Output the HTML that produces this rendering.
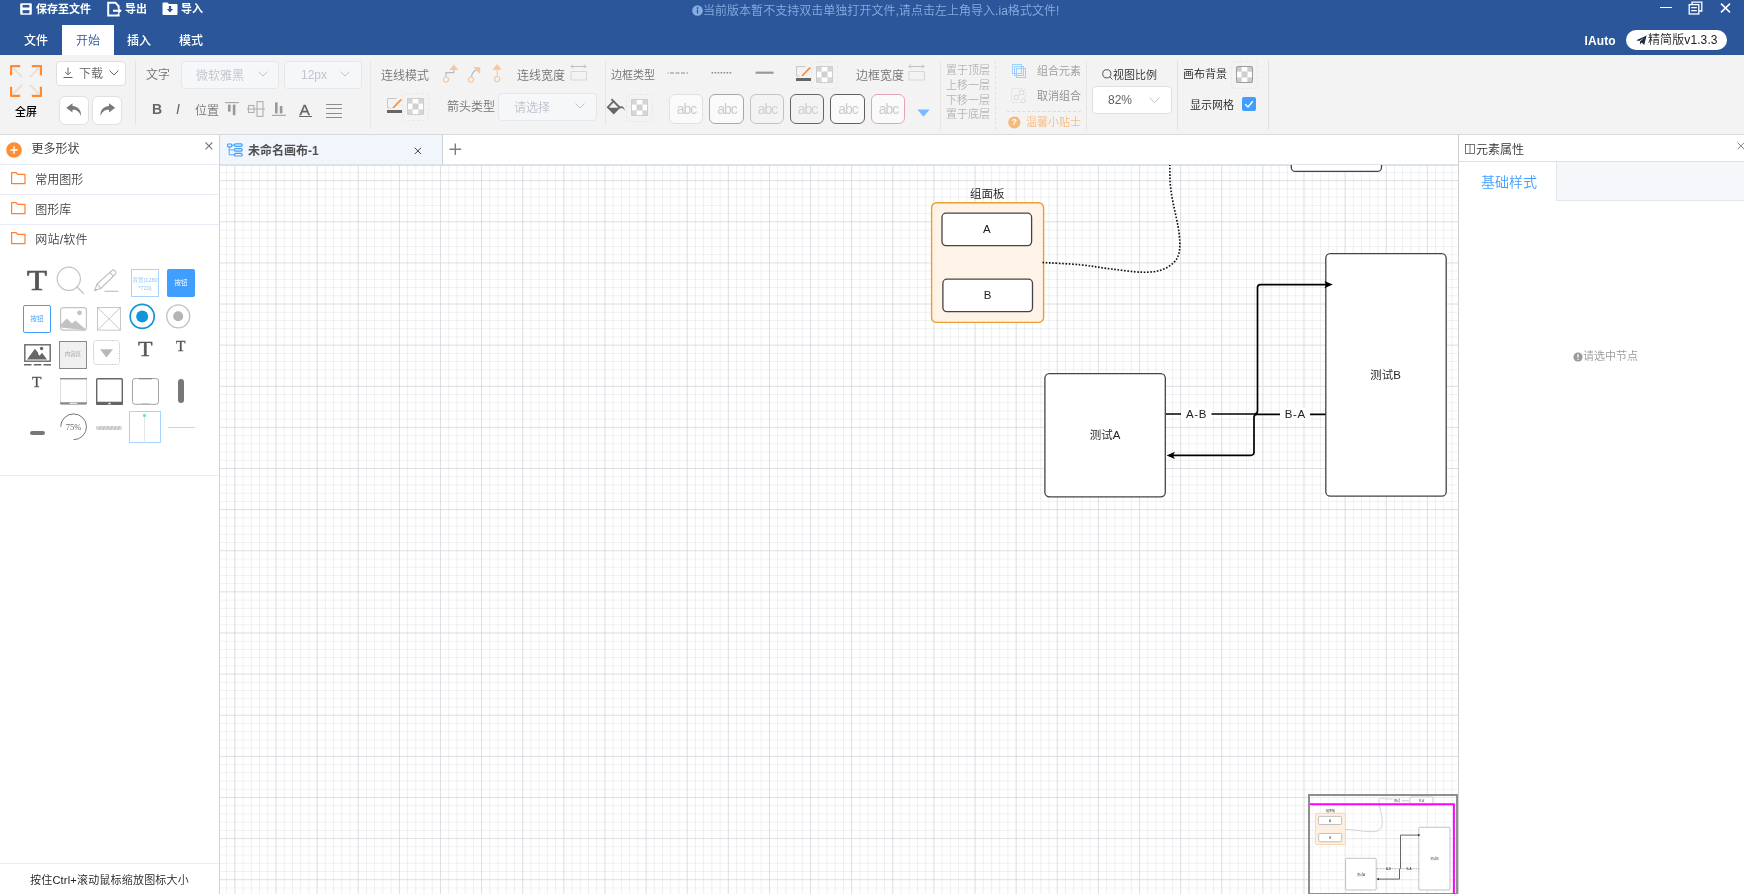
<!DOCTYPE html>
<html lang="zh-CN">
<head>
<meta charset="utf-8">
<title>IAuto</title>
<style>
*{box-sizing:border-box;margin:0;padding:0}
html,body{width:1744px;height:894px;overflow:hidden;background:#fff}
body{position:relative;font-family:"Liberation Sans","Noto Sans CJK SC",sans-serif;font-size:12px;color:#606266;font-weight:350}
.a{position:absolute}
.t{position:absolute;white-space:nowrap;line-height:1}
svg{position:absolute;overflow:visible}
#hdr{left:0;top:0;width:1744px;height:55px;background:#2b579a}
#tb{left:0;top:55px;width:1744px;height:80px;background:#f3f3f3;border-bottom:1px solid #d9d9d9}
.w{color:#fff}
.vs{position:absolute;width:1px;background:#e2e2e2;top:61px;height:69px}
.sel{position:absolute;border:1px solid #e5e7eb;border-radius:4px;background:#f6f7f9;height:28px}
.selw{position:absolute;border:1px solid #dcdfe6;border-radius:4px;background:#fff}
.dis{color:#c0c4cc}
.chk{position:absolute;border:1px dashed #e8e8e8;border-radius:4px;width:27px;height:28px}
.chk i{position:absolute;left:5px;top:5px;width:17px;height:17px;border-radius:2px;background:#fff;overflow:hidden}
.abc{position:absolute;top:94px;width:34px;height:30px;border:1px solid #ddd;border-radius:6px;background:#fafafa;color:#cbcbcb;font-size:14px;line-height:28px;text-align:center;letter-spacing:-1px;padding-left:1px;font-weight:400}
.lay{position:absolute;left:946px;font-size:11px;color:#b4b4b4;line-height:1;white-space:nowrap}
#left{left:0;top:135px;width:220px;height:759px;background:#fff;border-right:1px solid #d2d3d8}
.hl{position:absolute;left:0;width:219px;height:1px;background:#e6ebf5}
#right{left:1458px;top:135px;width:286px;height:759px;background:#fff;border-left:1px solid #cdcfd4}
</style>
</head>
<body>
<div id="wrap" style="position:absolute;left:0;top:0;width:1744px;height:894px;will-change:transform">
<!-- ===== HEADER ===== -->
<div id="hdr" class="a"></div>
<!-- save icon -->
<svg class="a" style="left:20px;top:3px" width="12" height="12" viewBox="0 0 12 12"><path d="M1.2 0.3h9.6a1 1 0 0 1 1 1v9.4a1 1 0 0 1-1 1H1.2a1 1 0 0 1-1-1V1.3a1 1 0 0 1 1-1z" fill="#fff"/><rect x="2.6" y="1.9" width="6.8" height="2.6" fill="#2b579a"/><rect x="2.6" y="7.1" width="6.8" height="3.2" fill="#2b579a"/></svg>
<div class="t w" style="left:36px;top:4px;font-size:11px;font-weight:700">保存至文件</div>
<!-- export icon -->
<svg class="a" style="left:107px;top:1px" width="15" height="16" viewBox="0 0 15 16"><path d="M11.600 7.400V5.200L8.400 1.700H1.200V14.600H11.600V12.400" fill="none" stroke="#fff" stroke-width="2"/><path d="M6 8.800h5.200V6.600l3.600 3.200-3.600 3.200v-2.200H6z" fill="#fff"/></svg>
<div class="t w" style="left:125px;top:4px;font-size:11px;font-weight:700">导出</div>
<!-- import icon -->
<svg class="a" style="left:162px;top:2px" width="16" height="13" viewBox="0 0 16 13"><path d="M0.5 1.5a1 1 0 0 1 1-1h4l1.5 1.6h7.5a1 1 0 0 1 1 1v8.9a1 1 0 0 1-1 1h-13a1 1 0 0 1-1-1z" fill="#fff"/><path d="M6.9 4h2.2v3h2l-3.1 3.4L4.9 7h2z" fill="#2b579a"/></svg>
<div class="t w" style="left:181px;top:4px;font-size:11px;font-weight:700">导入</div>
<!-- center msg -->
<svg class="a" style="left:692px;top:5px" width="11" height="11" viewBox="0 0 11 11"><circle cx="5.5" cy="5.5" r="5.3" fill="#86ace2"/><rect x="4.8" y="4.6" width="1.4" height="3.8" fill="#2b579a"/><circle cx="5.5" cy="3" r="0.9" fill="#2b579a"/></svg>
<div class="t" style="left:703px;top:5px;color:#86ace2;letter-spacing:0.030px">当前版本暂不支持双击单独打开文件,请点击左上角导入.ia格式文件!</div>
<!-- window controls -->
<div class="a" style="left:1660px;top:7px;width:12px;height:1.200px;background:#fff"></div>
<svg class="a" style="left:1688px;top:1px" width="15" height="14" viewBox="0 0 15 14"><path d="M4 3V1.2h9.8V10H11" fill="none" stroke="#fff" stroke-width="1.3"/><rect x="1.2" y="3.6" width="9.6" height="9.4" fill="none" stroke="#fff" stroke-width="1.3"/><path d="M3.2 6.6h5.6M3.2 9.6h5.6" stroke="#fff" stroke-width="1.2"/></svg>
<svg class="a" style="left:1720px;top:3px" width="11" height="10" viewBox="0 0 11 10"><path d="M1 0.6l9 8.8M10 0.6l-9 8.8" stroke="#fff" stroke-width="1.5"/></svg>
<!-- menu tabs -->
<div class="a" style="left:62px;top:25px;width:52px;height:30px;background:#fff"></div>
<div class="t w" style="left:24px;top:35px;font-size:12px;font-weight:500">文件</div>
<div class="t" style="left:76px;top:35px;font-size:12px;color:#2b579a">开始</div>
<div class="t w" style="left:127px;top:35px;font-size:12px;font-weight:500">插入</div>
<div class="t w" style="left:179px;top:35px;font-size:12px;font-weight:500">模式</div>
<!-- right brand -->
<div class="t w" style="left:1584.500px;top:35px;font-weight:bold;font-size:12px;letter-spacing:0.100px">IAuto</div>
<div class="a" style="left:1626px;top:30px;width:101px;height:20px;border-radius:10px;background:#fff"></div>
<svg class="a" style="left:1636px;top:35px" width="11" height="11" viewBox="0 0 11 11"><path d="M0.3 5.2L10.6 0.4 8.2 10 5.6 7.4 4 9.6V6.6L8.6 2.2 3.2 6z" fill="#1f2a44"/></svg>
<div class="t" style="left:1648px;top:34px;font-size:12px;color:#222;letter-spacing:0.100px">精简版v1.3.3</div>
<!--HDR-->
<!-- ===== TOOLBAR ===== -->
<div id="tb" class="a"></div>
<!-- fullscreen -->
<svg class="a" style="left:10px;top:65px" width="32" height="32" viewBox="0 0 32 32"><g fill="none" stroke="#ff8a34" stroke-width="2.200" stroke-linejoin="round"><path d="M1.100 10.200V1.100h9.100M21.800 1.100h9.100v9.100M30.900 21.800v9.100h-9.100M10.200 30.900H1.100v-9.100"/></g><g stroke="#e8e1d5" stroke-width="1.900"><path d="M2.500 2.500L12 12M29.500 2.500L20 12M29.500 29.500L20 20M2.500 29.500L12 20"/></g></svg>
<div class="t" style="left:15px;top:107px;font-size:11px;color:#000;font-weight:500">全屏</div>
<!-- download btn -->
<div class="selw" style="left:56px;top:61px;width:70px;height:25px"></div>
<svg class="a" style="left:63px;top:67px" width="10" height="12" viewBox="0 0 10 12"><path d="M5 0.500v7M2.200 5L5 7.800 7.800 5M0.500 10.500h9" fill="none" stroke="#606266" stroke-width="1"/></svg>
<div class="t" style="left:79px;top:68px;font-size:12px;color:#606266">下载</div>
<svg class="a" style="left:109px;top:70px" width="10" height="6" viewBox="0 0 10 6"><path d="M0.600 0.600L5 5 9.400 0.600" fill="none" stroke="#606266" stroke-width="1"/></svg>
<!-- undo/redo -->
<div class="selw" style="left:59px;top:96px;width:30px;height:29px;border-radius:6px;border-color:#e0e0e0"></div>
<div class="selw" style="left:92px;top:96px;width:30px;height:29px;border-radius:6px;border-color:#e0e0e0"></div>
<svg class="a" style="left:66px;top:103px" width="16.500" height="13.500" viewBox="0 0 16 12" preserveAspectRatio="none"><path d="M6.300 0.200L0.300 4.300l6 4.100V6c3.600-0.200 6.400 1.200 8.200 5.600 0.600-5.200-3-8.600-8.200-8.900z" fill="#7a7a7a"/></svg>
<svg class="a" style="left:99px;top:103px" width="16.500" height="13.500" viewBox="0 0 16 12" preserveAspectRatio="none"><path d="M9.700 0.200l6 4.100-6 4.100V6C6.100 5.800 3.300 7.200 1.500 11.600 0.900 6.400 4.500 3 9.700 2.700z" fill="#7a7a7a"/></svg>
<div class="vs" style="left:135px;height:64px"></div>
<!-- text group -->
<div class="t" style="left:146px;top:69px;color:#747474">文字</div>
<div class="sel" style="left:181px;top:61px;width:98px"></div>
<div class="t dis" style="left:196px;top:70px">微软雅黑</div>
<svg class="a" style="left:258px;top:71px" width="10" height="6" viewBox="0 0 10 6"><path d="M0.600 0.600L5 5 9.400 0.600" fill="none" stroke="#c0c4cc" stroke-width="1"/></svg>
<div class="sel" style="left:284px;top:61px;width:78px"></div>
<div class="t dis" style="left:301px;top:69px">12px</div>
<svg class="a" style="left:340px;top:71px" width="10" height="6" viewBox="0 0 10 6"><path d="M0.600 0.600L5 5 9.400 0.600" fill="none" stroke="#c0c4cc" stroke-width="1"/></svg>
<div class="t" style="left:152px;top:102px;font-size:14px;font-weight:bold;color:#666">B</div>
<div class="t" style="left:176px;top:102px;font-size:14px;font-style:italic;color:#666">I</div>
<div class="t" style="left:195px;top:105px;color:#777">位置</div>
<svg class="a" style="left:225px;top:102px" width="14" height="14" viewBox="0 0 14 14"><path d="M0 0.600h14" stroke="#aaa" stroke-width="1.200"/><rect x="3" y="2.600" width="2.600" height="7" fill="#999"/><rect x="7.800" y="2.600" width="2.600" height="10.600" fill="#999"/></svg>
<svg class="a" style="left:247px;top:101px" width="18" height="16" viewBox="0 0 18 16"><g fill="none" stroke="#b0b0b0" stroke-width="1.100"><rect x="1.500" y="4.500" width="5.500" height="7"/><rect x="10" y="0.600" width="6" height="14.800"/><path d="M0 8h18"/></g></svg>
<svg class="a" style="left:272px;top:102px" width="14" height="14" viewBox="0 0 14 14"><path d="M0 13.400h14" stroke="#aaa" stroke-width="1.200"/><rect x="3" y="0.400" width="2.600" height="11" fill="#999"/><rect x="7.800" y="4" width="2.600" height="7.400" fill="#999"/></svg>
<div class="t" style="left:299.500px;top:102px;font-size:15.500px;color:#666;font-weight:400;-webkit-text-stroke:0.350px #666">A</div>
<div class="a" style="left:299px;top:116px;width:13px;height:1.400px;background:#666"></div>
<svg class="a" style="left:326px;top:103px" width="16" height="15" viewBox="0 0 16 15"><path d="M0 1.500h16M0 5.500h16M0 10.500h16M0 14.500h16" stroke="#8c8c8c" stroke-width="1"/></svg>
<div class="vs" style="left:370px;height:68px;background:#e8e8e8"></div>
<!-- connector group -->
<div class="t" style="left:381px;top:70px;color:#747474">连线模式</div>
<svg class="a" style="left:440px;top:62px" width="64" height="22" viewBox="0 0 64 22"><g fill="none" stroke="#b4bac2" stroke-width="1.200"><path d="M6.0 14.8V10.7H13.8V7.5"/><path d="M31.2 14.9C32.4 10.5 34.0 8.5 37.2 7.6"/><path d="M57.2 14.4V7.5" stroke="#cdd3da"/></g><g fill="#f9c599"><path d="M13.8 2.5L18.3 7.9H9.3z"/><path d="M33.0 5.3H40.2V12.2L36.9 8.4z"/><path d="M57.2 1.9L61.8 7.7H52.6z"/></g><g fill="#f3f3f3" stroke="#f9c599" stroke-width="1.100"><circle cx="6" cy="17.6" r="2.600"/><circle cx="31" cy="17.6" r="2.600"/><circle cx="57.2" cy="17.1" r="2.600"/></g></svg>
<div class="t" style="left:517px;top:70px;color:#747474">连线宽度</div>
<svg class="a" style="left:570px;top:64px" width="17" height="17" viewBox="0 0 17 17"><path d="M1 2.500h15M3 0.500L1 2.500l2 2M14 0.500l2 2-2 2" fill="none" stroke="#b9b9b9" stroke-width="0.900"/><rect x="1" y="7.500" width="15.500" height="8.500" rx="0.500" fill="none" stroke="#d3d7de" stroke-width="1.100"/></svg>
<svg class="a" style="left:387px;top:98px" width="15" height="15" viewBox="0 0 15 15"><path d="M9.500 0.500H0.500v9.500h3" fill="none" stroke="#c8c8c8" stroke-width="1"/><path d="M6 10L14.200 1.500" stroke="#ff8a34" stroke-width="1.800"/><rect x="0" y="12" width="15" height="3" fill="#666"/></svg>
<div class="chk" style="left:402px;top:93px"></div><svg class="a" style="left:407px;top:98px" width="17" height="17" viewBox="0 0 17 17"><rect width="17" height="17" rx="2" fill="#fff"/><rect x="0.00" y="0.00" width="5.67" height="5.67" fill="#d6d6d6"/><rect x="11.33" y="0.00" width="5.67" height="5.67" fill="#d6d6d6"/><rect x="5.67" y="5.67" width="5.67" height="5.67" fill="#d6d6d6"/><rect x="0.00" y="11.33" width="5.67" height="5.67" fill="#d6d6d6"/><rect x="11.33" y="11.33" width="5.67" height="5.67" fill="#d6d6d6"/><rect x="5.67" y="5.67" width="5.67" height="5.67" fill="#d0d0d0"/><rect x="0.500" y="0.500" width="16" height="16" rx="2" fill="none" stroke="#cdcdcd"/></svg>
<div class="t" style="left:447px;top:101px;color:#747474">箭头类型</div>
<div class="sel" style="left:498px;top:93px;width:99px"></div>
<div class="t dis" style="left:514px;top:102px">请选择</div>
<svg class="a" style="left:575px;top:103px" width="10" height="6" viewBox="0 0 10 6"><path d="M0.600 0.600L5 5 9.400 0.600" fill="none" stroke="#c0c4cc" stroke-width="1"/></svg>
<div class="vs" style="left:605px;height:64px;background:#e6e6e6"></div>
<!-- border group -->
<div class="t" style="left:611px;top:70px;font-size:11px;color:#747474">边框类型</div>
<svg class="a" style="left:667px;top:70px" width="108" height="6" viewBox="0 0 108 6"><path d="M0.500 3h20.500" stroke="#8c8c8c" stroke-width="1.200" stroke-dasharray="4 1.500" stroke-dashoffset="3"/><path d="M44.600 2.700h20.500" stroke="#8c8c8c" stroke-width="1.600" stroke-dasharray="1.600 1.400"/><path d="M88.600 2.700h18" stroke="#999" stroke-width="2.200"/></svg>
<svg class="a" style="left:796px;top:66px" width="15" height="15" viewBox="0 0 15 15"><path d="M9.500 0.500H0.500v9.500h3" fill="none" stroke="#c8c8c8" stroke-width="1"/><path d="M6 10L14.200 1.500" stroke="#ff8a34" stroke-width="1.800"/><rect x="0" y="12" width="15" height="3" fill="#666"/></svg>
<div class="chk" style="left:811px;top:61px"></div><svg class="a" style="left:816px;top:66px" width="17" height="17" viewBox="0 0 17 17"><rect width="17" height="17" rx="2" fill="#fff"/><rect x="0.00" y="0.00" width="5.67" height="5.67" fill="#d6d6d6"/><rect x="11.33" y="0.00" width="5.67" height="5.67" fill="#d6d6d6"/><rect x="5.67" y="5.67" width="5.67" height="5.67" fill="#d6d6d6"/><rect x="0.00" y="11.33" width="5.67" height="5.67" fill="#d6d6d6"/><rect x="11.33" y="11.33" width="5.67" height="5.67" fill="#d6d6d6"/><rect x="5.67" y="5.67" width="5.67" height="5.67" fill="#d0d0d0"/><rect x="0.500" y="0.500" width="16" height="16" rx="2" fill="none" stroke="#cdcdcd"/></svg>
<div class="t" style="left:856px;top:70px;color:#747474">边框宽度</div>
<svg class="a" style="left:908px;top:64px" width="17" height="17" viewBox="0 0 17 17"><path d="M1 2.500h15M3 0.500L1 2.500l2 2M14 0.500l2 2-2 2" fill="none" stroke="#b9b9b9" stroke-width="0.900"/><rect x="1" y="7.500" width="15.500" height="8.500" rx="0.500" fill="none" stroke="#d3d7de" stroke-width="1.100"/></svg>
<svg class="a" style="left:607px;top:97.500px" width="19" height="18.500" viewBox="0 0 18 17" preserveAspectRatio="none"><path d="M4.200 1L6 2.800M5.500 2.300L11.800 8.600 6.400 14 0.800 8.400 6.500 2.700" fill="none" stroke="#686868" stroke-width="1.700"/><path d="M1.200 9h10.400L6.400 14.200z" fill="#686868"/><path d="M11.500 8.200c2.600-1.600 4.700-0.600 5.600 3.600-1.600-2.600-3.200-3-5-2z" fill="#686868"/></svg>
<div class="chk" style="left:626px;top:94px"></div><svg class="a" style="left:631px;top:99px" width="17" height="17" viewBox="0 0 17 17"><rect width="17" height="17" rx="2" fill="#fff"/><rect x="0.00" y="0.00" width="5.67" height="5.67" fill="#d6d6d6"/><rect x="11.33" y="0.00" width="5.67" height="5.67" fill="#d6d6d6"/><rect x="5.67" y="5.67" width="5.67" height="5.67" fill="#d6d6d6"/><rect x="0.00" y="11.33" width="5.67" height="5.67" fill="#d6d6d6"/><rect x="11.33" y="11.33" width="5.67" height="5.67" fill="#d6d6d6"/><rect x="5.67" y="5.67" width="5.67" height="5.67" fill="#d0d0d0"/><rect x="0.500" y="0.500" width="16" height="16" rx="2" fill="none" stroke="#cdcdcd"/></svg>
<div class="abc" style="left:669px;border-color:#e1e1e1">abc</div>
<div class="abc" style="left:709px;width:35px;border-color:#a8a8a8">abc</div>
<div class="abc" style="left:750px;border-color:#c4c4c4;background:#f3f3f3;color:#d0d0d0">abc</div>
<div class="abc" style="left:790px;width:34px;border-color:#666;background:#f3f3f3;color:#d0d0d0">abc</div>
<div class="abc" style="left:830px;width:35px;border-color:#606060">abc</div>
<div class="abc" style="left:871px;border-color:#e3a5b6">abc</div>
<svg class="a" style="left:917px;top:109px" width="13" height="8" viewBox="0 0 13 8"><path d="M0.300 0.600h12.400L6.500 7.800z" fill="#79bbff"/></svg>
<div class="vs" style="left:940px;background:#e6e6e6"></div>
<div class="lay" style="top:65px">置于顶层</div>
<div class="lay" style="top:80px">上移一层</div>
<div class="lay" style="top:95px">下移一层</div>
<div class="lay" style="top:109px">置于底层</div>
<div class="a" style="left:995px;top:61px;height:69px;width:0;border-left:1px dashed #e2e2e2"></div>
<!-- group -->
<svg class="a" style="left:1012px;top:64px" width="15" height="15" viewBox="0 0 15 15"><g fill="none" stroke="#a0cfff" stroke-width="1"><rect x="0.500" y="0.500" width="9" height="9"/><rect x="2.500" y="2.500" width="9" height="9"/><rect x="4.500" y="4.500" width="9" height="9"/></g></svg>
<div class="t" style="left:1037px;top:66px;font-size:11px;color:#9a9a9a">组合元素</div>
<svg class="a" style="left:1011px;top:88px" width="16" height="16" viewBox="0 0 16 16"><g fill="none" stroke="#dedede" stroke-width="1"><rect x="0.500" y="0.500" width="14" height="14" rx="2" stroke-dasharray="2 1.500"/><rect x="8.500" y="2.500" width="4" height="4"/><rect x="3.500" y="7.500" width="4" height="4"/><circle cx="12.300" cy="12.800" r="2"/></g></svg>
<div class="t" style="left:1037px;top:91px;font-size:11px;color:#8c8c8c">取消组合</div>
<div class="a" style="left:1007px;top:111px;width:74px;height:0;border-top:1px dashed #dcdcdc"></div>
<svg class="a" style="left:1008px;top:116px" width="13" height="13" viewBox="0 0 13 13"><circle cx="6.300" cy="6.500" r="6.100" fill="#f7b977"/></svg>
<div class="t" style="left:1011.500px;top:118px;font-size:9px;color:#fff;font-weight:bold">?</div>
<div class="t" style="left:1026px;top:117px;font-size:11px;color:#f7bb7c">温馨小贴士</div>
<div class="vs" style="left:1086px;background:#e6e6e6"></div>
<!-- zoom -->
<svg class="a" style="left:1102px;top:69px" width="11" height="11" viewBox="0 0 11 11"><circle cx="4.800" cy="4.800" r="4.100" fill="none" stroke="#444" stroke-width="0.900"/><path d="M7.700 7.700L10.400 10.400" stroke="#444" stroke-width="0.900"/></svg>
<div class="t" style="left:1113px;top:70px;font-size:11px;color:#2a2a2a">视图比例</div>
<div class="selw" style="left:1092px;top:86px;width:80px;height:28px"></div>
<div class="t" style="left:1108px;top:94px;font-size:12px;color:#606266">82%</div>
<svg class="a" style="left:1149px;top:97px" width="11" height="7" viewBox="0 0 11 7"><path d="M0.600 0.600L5.500 5.800 10.400 0.600" fill="none" stroke="#c0c4cc" stroke-width="1"/></svg>
<div class="vs" style="left:1177px;background:#e0e0e0"></div>
<div class="t" style="left:1183px;top:69px;font-size:11px;color:#222">画布背景</div>
<div class="chk" style="left:1231px;top:61px"></div><svg class="a" style="left:1236px;top:66px" width="17" height="17" viewBox="0 0 17 17"><rect width="17" height="17" rx="2" fill="#fff"/><rect x="0.00" y="0.00" width="5.67" height="5.67" fill="#ccc"/><rect x="11.33" y="0.00" width="5.67" height="5.67" fill="#ccc"/><rect x="5.67" y="5.67" width="5.67" height="5.67" fill="#ccc"/><rect x="0.00" y="11.33" width="5.67" height="5.67" fill="#ccc"/><rect x="11.33" y="11.33" width="5.67" height="5.67" fill="#ccc"/><rect x="5.67" y="5.67" width="5.67" height="5.67" fill="#d0d0d0"/><rect x="0.5" y="0.5" width="16" height="16" rx="2" fill="none" stroke="#9a9a9a"/></svg>
<div class="t" style="left:1190px;top:100px;font-size:11px;color:#222">显示网格</div>
<div class="a" style="left:1242px;top:97px;width:14px;height:14px;border-radius:2px;background:#409eff"></div>
<svg class="a" style="left:1242px;top:97px" width="14" height="14" viewBox="0 0 14 14"><path d="M3.200 7.200L6 10 10.800 4.200" fill="none" stroke="#fff" stroke-width="1.400"/></svg>
<div class="vs" style="left:1268px;background:#e0e0e0"></div>
<!--TB-->
<!-- ===== LEFT ===== -->
<div id="left" class="a"></div>
<!-- more shapes header -->
<svg class="a" style="left:6px;top:142px" width="16" height="16" viewBox="0 0 16 16"><circle cx="8" cy="8" r="7.800" fill="#ff8d36"/><path d="M8 4.300v7.400M4.300 8h7.400" stroke="#fff" stroke-width="1.400"/></svg>
<div class="t" style="left:31.400px;top:143px;color:#333">更多形状</div>
<svg class="a" style="left:204.500px;top:142px" width="8" height="8" viewBox="0 0 8 8"><path d="M0.500 0.500l6.800 6.800M7.300 0.500l-6.800 6.800" stroke="#7a7a7a" stroke-width="1.100"/></svg>
<div class="hl" style="top:164px"></div>
<div class="hl" style="top:194px"></div>
<div class="hl" style="top:224px"></div>
<div class="hl" style="top:475px"></div>
<div class="hl" style="top:863px"></div>
<svg class="a" style="left:11px;top:172px" width="15" height="13" viewBox="0 0 15 13"><path d="M0.600 0.600h4.600l1.400 1.800h7.400v9.200H0.600z" fill="none" stroke="#ff7f2a" stroke-width="1.200" stroke-linejoin="round"/></svg>
<div class="t" style="left:35.300px;top:174px;color:#444">常用图形</div>
<svg class="a" style="left:11px;top:202px" width="15" height="13" viewBox="0 0 15 13"><path d="M0.600 0.600h4.600l1.400 1.800h7.400v9.200H0.600z" fill="none" stroke="#ff7f2a" stroke-width="1.200" stroke-linejoin="round"/></svg>
<div class="t" style="left:35.300px;top:204px;color:#444">图形库</div>
<svg class="a" style="left:11px;top:232px" width="15" height="13" viewBox="0 0 15 13"><path d="M0.600 0.600h4.600l1.400 1.800h7.400v9.200H0.600z" fill="none" stroke="#ff7f2a" stroke-width="1.200" stroke-linejoin="round"/></svg>
<div class="t" style="left:35.300px;top:234px;color:#444;letter-spacing:0.200px">网站/软件</div>
<div class="t" style="left:30px;top:875px;font-size:11px;color:#222;letter-spacing:0.200px">按住Ctrl+滚动鼠标缩放图标大小</div>
<!-- shape icons row1 -->
<div class="t" style="left:26.500px;top:265px;font-family:'Liberation Serif',serif;font-size:30px;color:#555;font-weight:400;-webkit-text-stroke:0.700px #555;transform:scaleX(1.09);transform-origin:0 0">T</div>
<svg class="a" style="left:56px;top:266px" width="30" height="30" viewBox="0 0 30 30"><circle cx="12.800" cy="12.800" r="11.600" fill="none" stroke="#c2c2c2" stroke-width="1.200"/><path d="M21 21l6.800 6.800" stroke="#c2c2c2" stroke-width="1.300"/></svg>
<svg class="a" style="left:94px;top:269px" width="26" height="24" viewBox="0 0 26 24"><g fill="none" stroke="#bdbdbd" stroke-width="1.100"><path d="M0.800 21.300l2.200-6.300L17.800 1.600a2 2 0 0 1 2.800 0l0.800 0.800a2 2 0 0 1 0 2.800L6.800 19.500z"/><path d="M15.800 3.600l3.600 3.600M3 15l3.800 4.500M0.800 21.300l2.400-1"/><path d="M10.500 22.300h14"/></g></svg>
<div class="a" style="left:131px;top:269px;width:28px;height:28px;border:1px solid #a9d3ff;background:#fff"></div>
<div class="t" style="left:131px;top:276px;width:28px;text-align:center;font-size:5.500px;line-height:8px;color:#8cc5ff;white-space:normal">背景(1280 *720)</div>
<div class="a" style="left:167px;top:269px;width:28px;height:28px;border-radius:2px;background:#409eff"></div>
<div class="t" style="left:167px;top:279.500px;width:28px;text-align:center;font-size:6.500px;color:#fff">按钮</div>
<!-- row2 -->
<div class="a" style="left:23px;top:305px;width:28px;height:28px;border-radius:2px;border:1px solid #409eff;background:#fff"></div>
<div class="t" style="left:23px;top:315.500px;width:28px;text-align:center;font-size:6.500px;color:#409eff">按钮</div>
<svg class="a" style="left:60px;top:307px" width="27" height="24" viewBox="0 0 27 24"><rect x="0.600" y="0.600" width="25.800" height="22.600" rx="2.500" fill="#fff" stroke="#c4c4c4" stroke-width="1.200"/><path d="M0.600 20.600V17.500L6.800 11.600l5.200 4.800 3.400-3 10.500 9.200v0.600z" fill="#c2c2c2"/><circle cx="19.500" cy="5.800" r="2.400" fill="#c2c2c2"/></svg>
<svg class="a" style="left:97px;top:307px" width="24" height="24" viewBox="0 0 24 24"><g fill="none" stroke="#c2c2c2" stroke-width="0.900"><rect x="0.500" y="0.500" width="23" height="22.600"/><path d="M0.500 0.500l23 22.600M23.500 0.500l-23 22.600"/></g></svg>
<svg class="a" style="left:129px;top:303px" width="27" height="27" viewBox="0 0 27 27"><circle cx="13.200" cy="13.400" r="12" fill="#fff" stroke="#1296db" stroke-width="1.700"/><circle cx="13.200" cy="13.400" r="6" fill="#1296db"/></svg>
<svg class="a" style="left:166px;top:304px" width="25" height="25" viewBox="0 0 25 25"><circle cx="12.200" cy="12.300" r="11.500" fill="#fff" stroke="#c2c2c2" stroke-width="1.300"/><circle cx="12.200" cy="12.300" r="5" fill="#b4b4b4"/></svg>
<!-- row3 -->
<svg class="a" style="left:24px;top:344px" width="27" height="22" viewBox="0 0 27 22"><rect x="0.800" y="0.800" width="25.400" height="16.400" fill="#fff" stroke="#666" stroke-width="1.400"/><path d="M3 15.500L11 4.800l5 6.500 2-2.600 5 6.800z" fill="#666"/><path d="M14.300 9.200l1.600 2.200" stroke="#fff" stroke-width="1.200"/><circle cx="17.600" cy="4.500" r="1.700" fill="#666"/><path d="M0 20.700h7.500M9.800 20.700h7.500M19.500 20.700H27" stroke="#666" stroke-width="1.400"/></svg>
<div class="a" style="left:59px;top:341px;width:28px;height:28px;border:1px solid #8a8a8a;background:#f0f0f0"></div>
<div class="t" style="left:59px;top:352px;width:28px;text-align:center;font-size:5.500px;color:#9a9a9a">内容区</div>
<svg class="a" style="left:93px;top:340px" width="27" height="25" viewBox="0 0 27 25"><rect x="0.500" y="0.500" width="26" height="24" rx="3" fill="#fff" stroke="#c4c4c4" stroke-width="1" stroke-dasharray="1 0.700"/></svg>
<svg class="a" style="left:100px;top:349px" width="13" height="9" viewBox="0 0 13 9"><path d="M0 0.200h13L6.500 8.400z" fill="#b8b8b8"/></svg>
<div class="t" style="left:137.500px;top:338px;font-family:'Liberation Serif',serif;font-size:22px;color:#555;-webkit-text-stroke:0.400px #555;transform:scaleX(1.08);transform-origin:0 0">T</div>
<div class="t" style="left:176px;top:338px;font-family:'Liberation Serif',serif;font-size:15.500px;color:#555;-webkit-text-stroke:0.300px #555">T</div>
<!-- row4 -->
<div class="t" style="left:32px;top:374px;font-family:'Liberation Serif',serif;font-size:15.500px;color:#555;-webkit-text-stroke:0.300px #555">T</div>
<svg class="a" style="left:60px;top:378px" width="27" height="27" viewBox="0 0 27 27"><rect x="0.500" y="0.500" width="26" height="25.800" rx="1" fill="#fff" stroke="#d0d4dc" stroke-width="0.800"/><rect x="0" y="0" width="27" height="1.400" fill="#8a8a8a"/><path d="M0 24.300h27v1a1.200 1.200 0 0 1-1.200 1.200H1.200A1.200 1.200 0 0 1 0 25.300z" fill="#8a8a8a"/><rect x="9.500" y="24.800" width="8" height="1" rx="0.500" fill="#fff"/></svg>
<svg class="a" style="left:96px;top:378px" width="27" height="27" viewBox="0 0 27 27"><rect x="0.700" y="0.700" width="25.600" height="25.600" rx="1" fill="#fff" stroke="#666" stroke-width="1.400"/><rect x="0" y="23.800" width="27" height="3.200" rx="1" fill="#666"/><path d="M11.700 26.200l1.800-1.800 1.800 1.800z" fill="#fff"/></svg>
<svg class="a" style="left:132px;top:378px" width="27" height="27" viewBox="0 0 27 27"><rect x="0.500" y="0.500" width="26" height="25.800" rx="2.500" fill="#fff" stroke="#9a9a9a" stroke-width="0.900"/><path d="M7 0.700h13" stroke="#8a8a8a" stroke-width="1.300"/><path d="M9 25.800h9" stroke="#b0b0b0" stroke-width="0.800"/></svg>
<div class="a" style="left:178px;top:379px;width:5.500px;height:24px;border-radius:3px;background:#777"></div>
<!-- row5 -->
<div class="a" style="left:29.500px;top:430.500px;width:15.500px;height:4.200px;border-radius:2.100px;background:#777"></div>
<svg class="a" style="left:60px;top:413px" width="28" height="28" viewBox="0 0 28 28"><path d="M0.700 13.800A12.900 12.900 0 1 1 13.600 26.700" fill="none" stroke="#666" stroke-width="0.900"/></svg>
<div class="t" style="left:60px;top:423px;width:27px;text-align:center;font-family:'Liberation Serif',serif;font-size:8.500px;color:#666">75%</div>
<div class="a" style="left:95.500px;top:426px;width:26.500px;height:4px;border-radius:2px;background:repeating-linear-gradient(115deg,#c8c8c8 0 2.200px,#dedede 2.200px 3.400px)"></div>
<div class="a" style="left:129px;top:411px;width:32px;height:32px;border:1px solid #a9d3ff;background:#fff"></div>
<div class="a" style="left:144px;top:415px;width:1px;height:26px;background:#e4e4e4"></div>
<div class="a" style="left:142.500px;top:414px;width:3.500px;height:2.500px;border-radius:1px;background:#7fe0c0"></div>
<div class="a" style="left:167.500px;top:427px;width:27px;height:1px;background:#d4d4d4"></div>
<!--LEFT-->
<!-- ===== CANVAS ===== -->
<!-- tab bar -->
<div class="a" style="left:220px;top:135px;width:1238px;height:30px;background:#fff;border-bottom:1px solid #dfe3ea"></div>
<div class="a" style="left:220px;top:135px;width:223px;height:30px;background:#f1f5fc;border-right:1px solid #cdd0d6;border-bottom:1px solid #dfe3ea"></div>
<svg class="a" style="left:227px;top:143px" width="16" height="14" viewBox="0 0 16 14"><g fill="none" stroke="#409eff" stroke-width="1.200"><rect x="0.600" y="1" width="4.200" height="2.800" rx="0.800"/><rect x="7.400" y="0.800" width="7.800" height="2.600" rx="1.300"/><rect x="7.400" y="5.600" width="7.800" height="2.600" rx="1.300"/><rect x="7.400" y="10.400" width="7.800" height="2.600" rx="1.300"/><path d="M4.800 2.200h2.600M2.200 3.800v8h5.200M2.200 6.900h5.200" stroke-width="0.900"/></g></svg>
<div class="t" style="left:248px;top:145px;font-size:12px;font-weight:700;color:#505050">未命名画布-1</div>
<svg class="a" style="left:414px;top:147px" width="8" height="8" viewBox="0 0 8 8"><path d="M0.800 0.800l6.200 6.200M7 0.800L0.800 7" stroke="#444" stroke-width="1"/></svg>
<svg class="a" style="left:448.500px;top:142.500px" width="13" height="13" viewBox="0 0 13 13"><path d="M6.300 0.500v11.600M0.500 6.300h11.600" stroke="#7e7e7e" stroke-width="1.400"/></svg>
<!-- canvas grid -->
<svg class="a" style="left:220px;top:165px;overflow:hidden" width="1238" height="729" viewBox="0 0 1238 729">
<defs>
<pattern id="gmin" width="8.224" height="8.224" patternUnits="userSpaceOnUse" x="14.400" y="15.200"><path d="M0 0H8.224M0 0V8.224" fill="none" stroke="#e0e1e5" stroke-width="1"/></pattern>
<pattern id="gmaj" width="41.12" height="41.12" patternUnits="userSpaceOnUse" x="14.400" y="15.200"><path d="M0 0H41.12M0 0V41.12" fill="none" stroke="#cccfd6" stroke-width="1"/></pattern>
</defs>
<rect width="1238" height="729" fill="#fff"/>
<rect width="1238" height="729" fill="url(#gmin)"/>
<rect width="1238" height="729" fill="url(#gmaj)"/>
<path d="M0 0.500H1238" stroke="#dcdfe6" stroke-width="1" fill="none"/>
<g stroke-linejoin="round">
<rect x="1071.3" y="-40" width="90.2" height="46.400" rx="4" fill="#fff" stroke="#444" stroke-width="1.300"/>
<rect x="711.600" y="37.800" width="112" height="119.600" rx="5" fill="#fff3e8" stroke="#eaa02e" stroke-width="1.400"/>
<rect x="722" y="48.200" width="89.600" height="32.400" rx="4" fill="#fff" stroke="#444" stroke-width="1.300"/>
<rect x="722.900" y="114.200" width="89.600" height="32.400" rx="4" fill="#fff" stroke="#444" stroke-width="1.300"/>
<rect x="824.900" y="208.600" width="120.400" height="123.200" rx="4.500" fill="#fff" stroke="#444" stroke-width="1.300"/>
<rect x="1105.800" y="88.600" width="120.400" height="242.600" rx="4.500" fill="#fff" stroke="#444" stroke-width="1.300"/>
</g>
<g font-family="Liberation Sans, Noto Sans CJK SC, sans-serif" font-size="11.500" fill="#222" text-anchor="middle" font-weight="350">
<text x="767.300" y="32.600">组面板</text>
<text x="766.800" y="68.400">A</text>
<text x="767.700" y="134.400">B</text>
<text x="885" y="273.700">测试A</text>
<text x="1165.500" y="214">测试B</text>
</g>
<path d="M822.5 97.5C828.8 97.9 848.5 98.7 860.0 99.8C871.5 100.8 880.8 102.8 891.2 104.0C901.7 105.2 914.2 107.1 922.5 107.2C930.8 107.4 936.0 106.6 941.2 105.0C946.5 103.4 950.8 100.2 953.8 97.5C956.7 94.8 957.8 92.1 958.8 88.8C959.8 85.4 959.9 82.1 959.8 77.5C959.6 72.9 959.5 69.8 958.0 61.2C956.5 52.7 952.4 36.2 951.0 26.0C949.6 15.8 950.0 6.0 949.8 0.0C949.5 -6.0 949.6 -8.3 949.6 -10.0" fill="none" stroke="#111" stroke-width="1.640" stroke-dasharray="1.640 1.640"/>
<g fill="none" stroke="#000" stroke-width="1.700">
<path d="M946 249H1034.500a3 3 0 0 0 3-3V122.600a3 3 0 0 1 3-3H1107"/>
<path d="M1105.500 249.400H1037a3 3 0 0 0-3 3V287.400a3 3 0 0 1-3 3H952"/>
</g>
<path d="M1112.800 119.600l-8.400 -3.600 2 3.600 -2 3.600z" fill="#000"/>
<path d="M946.600 290.400l8.400 -3.600 -2 3.600 2 3.600z" fill="#000"/>
<rect x="961" y="243" width="30.500" height="12" fill="#fff"/>
<rect x="1060" y="243" width="30" height="12" fill="#fff"/>
<g font-family="Liberation Sans, Noto Sans CJK SC, sans-serif" font-size="11.500" fill="#222" text-anchor="middle" font-weight="350" letter-spacing="0.600">
<text x="976.600" y="253.200">A-B</text>
<text x="1075.300" y="253.200">B-A</text>
</g>
<!-- minimap -->
<g>
<rect x="1089" y="630" width="148" height="99" fill="#fff" fill-opacity="0.300" stroke="#8e8e8e" stroke-width="2"/>
<rect x="1190" y="632" width="23" height="8" rx="1" fill="#fff" stroke="#a8a8a8" stroke-width="0.600"/>
<rect x="1095.400" y="648.300" width="30" height="31.200" rx="1.500" fill="#fdf0e2" stroke="#f6cf9f" stroke-width="0.800"/>
<rect x="1098.500" y="651.400" width="23" height="8.100" rx="1" fill="#fff" stroke="#9c9c9c" stroke-width="0.600"/>
<rect x="1098.700" y="668.500" width="23" height="8.200" rx="1" fill="#fff" stroke="#9c9c9c" stroke-width="0.600"/>
<rect x="1125.600" y="693.300" width="30.600" height="31.700" rx="1" fill="#fff" stroke="#9c9c9c" stroke-width="0.600"/>
<rect x="1198.800" y="662.300" width="31.200" height="62.700" rx="1" fill="#fff" stroke="#9c9c9c" stroke-width="0.600"/>
<path d="M1125.400 664.400C1140 665 1152 668.500 1158.500 665.500S1161.500 650 1159.500 640S1162 634.500 1170 634H1173" fill="none" stroke="#a8a8a8" stroke-width="0.500"/>
<path d="M1182 635.800h7" fill="none" stroke="#999" stroke-width="0.500"/>
<path d="M1156.500 703.700h43" fill="none" stroke="#9a9a9a" stroke-width="0.700" stroke-dasharray="2 1"/><path d="M1180.500 703.700v-33.600h18" fill="none" stroke="#555" stroke-width="0.900"/>
<path d="M1179.500 703.800v10.300h-22" fill="none" stroke="#555" stroke-width="0.900"/>
<path d="M1200.500 670.100l-2.500-1.200v2.400zM1156.500 714.100l2.500-1.200v2.400z" fill="#222"/>
<g font-family="Liberation Sans, Noto Sans CJK SC, sans-serif" font-size="3" fill="#333" text-anchor="middle">
<text x="1110.400" y="647.400">组面板</text><text x="1110" y="656.600">A</text><text x="1110.200" y="673.800">B</text>
<text x="1141" y="710.600">测试A</text><text x="1214.500" y="694.600">测试B</text><text x="1201.600" y="637.200">节点</text><text x="1177" y="636.800">测试</text>
<text x="1168.500" y="704.800">A-B</text><text x="1189" y="704.800">B-A</text>
</g>
<path d="M1090 639.300H1233.900V729" fill="none" stroke="#ff00ff" stroke-width="2"/>
</g>
</svg>
<!--CANVAS-->
<!-- ===== RIGHT ===== -->
<div id="right" class="a"></div>
<svg class="a" style="left:1465px;top:144px" width="10" height="10" viewBox="0 0 10 10"><rect x="0.500" y="0.500" width="9" height="9" fill="none" stroke="#555" stroke-width="0.800"/><path d="M5 0.500v9" stroke="#555" stroke-width="0.800"/></svg>
<div class="t" style="left:1476px;top:144px;color:#333">元素属性</div>
<svg class="a" style="left:1737px;top:142px" width="8" height="8" viewBox="0 0 8 8"><path d="M0.500 0.500l6.800 6.800M7.300 0.500l-6.800 6.800" stroke="#858585" stroke-width="1"/></svg>
<div class="a" style="left:1459px;top:161px;width:285px;height:1px;background:#dde1e9"></div>
<div class="a" style="left:1556px;top:162px;width:188px;height:39px;background:#f5f7fa;border-left:1px solid #e4e7ed;border-bottom:1px solid #e4e7ed"></div>
<div class="t" style="left:1481px;top:175px;font-size:14px;color:#409eff">基础样式</div>
<svg class="a" style="left:1573px;top:352px" width="10" height="10" viewBox="0 0 10 10"><circle cx="5" cy="5" r="4.600" fill="#9a9a9a"/><rect x="4.400" y="2" width="1.200" height="3.800" fill="#fff"/><circle cx="5" cy="7.400" r="0.700" fill="#fff"/></svg>
<div class="t" style="left:1583px;top:351px;font-size:11px;color:#9a9a9a">请选中节点</div>
<!--RIGHT-->
</div>
</body>
</html>
